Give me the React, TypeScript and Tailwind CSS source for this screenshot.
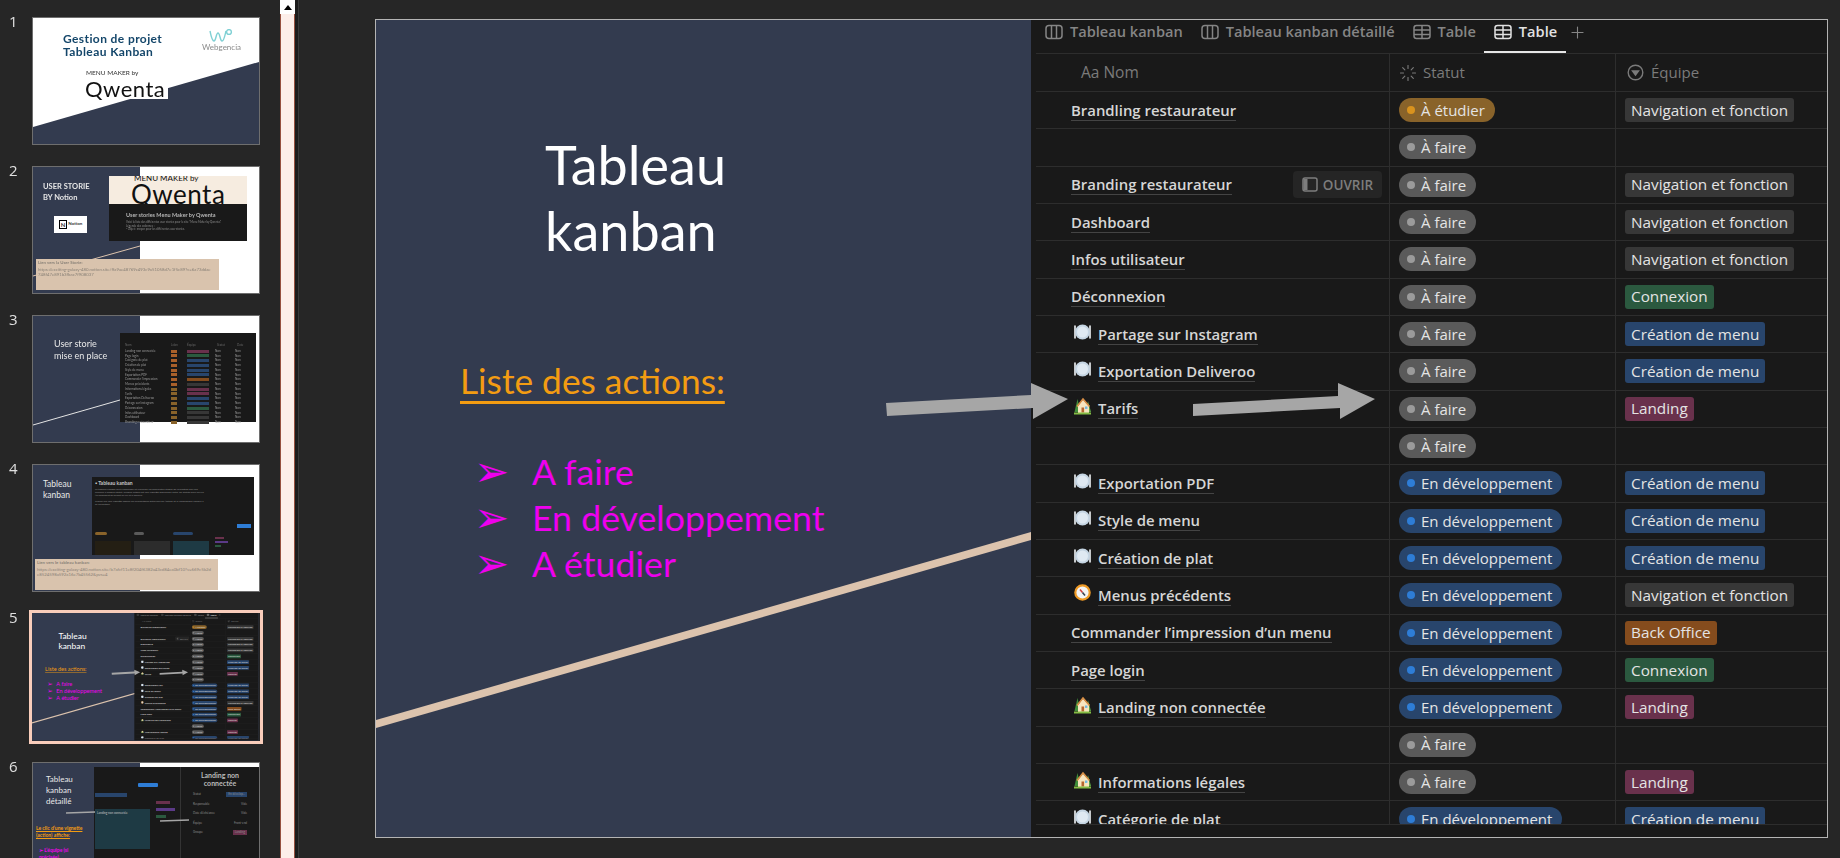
import { Loader, Plus } from "lucide-react";

type Status = "etudier" | "faire" | "dev";
type Team = "nav" | "conn" | "menu" | "land" | "back";
type Emoji = "plate" | "house" | "compass";

const rows: { name?: string; icon?: Emoji; status: Status; team?: Team; open?: boolean }[] = [
  { name: "Brandling restaurateur", status: "etudier", team: "nav" },
  { status: "faire" },
  { name: "Branding restaurateur", status: "faire", team: "nav", open: true },
  { name: "Dashboard", status: "faire", team: "nav" },
  { name: "Infos utilisateur", status: "faire", team: "nav" },
  { name: "Déconnexion", status: "faire", team: "conn" },
  { name: "Partage sur Instagram", icon: "plate", status: "faire", team: "menu" },
  { name: "Exportation Deliveroo", icon: "plate", status: "faire", team: "menu" },
  { name: "Tarifs", icon: "house", status: "faire", team: "land" },
  { status: "faire" },
  { name: "Exportation PDF", icon: "plate", status: "dev", team: "menu" },
  { name: "Style de menu", icon: "plate", status: "dev", team: "menu" },
  { name: "Création de plat", icon: "plate", status: "dev", team: "menu" },
  { name: "Menus précédents", icon: "compass", status: "dev", team: "nav" },
  { name: "Commander l’impression d’un menu", status: "dev", team: "back" },
  { name: "Page login", status: "dev", team: "conn" },
  { name: "Landing non connectée", icon: "house", status: "dev", team: "land" },
  { status: "faire" },
  { name: "Informations légales", icon: "house", status: "faire", team: "land" },
  { name: "Catégorie de plat", icon: "plate", status: "dev", team: "menu" },
];

const statusStyle = {
  etudier: { label: "À étudier", pill: "bg-[#89632a]", dot: "bg-[#d9931e]" },
  faire: { label: "À faire", pill: "bg-[#5a5a5a]", dot: "bg-[#9b9b9b]" },
  dev: { label: "En développement", pill: "bg-[#28456c]", dot: "bg-[#2e7dd6]" },
};

const teamStyle = {
  nav: { label: "Navigation et fonction", tag: "bg-[#373737]" },
  conn: { label: "Connexion", tag: "bg-[#2b593f]" },
  menu: { label: "Création de menu", tag: "bg-[#28456c]" },
  land: { label: "Landing", tag: "bg-[#69314c]" },
  back: { label: "Back Office", tag: "bg-[#854c1d]" },
};

function ColumnsIcon() {
  return (
    <svg width="18" height="16" viewBox="0 0 18 16" fill="none" stroke="currentColor" strokeWidth="1.5">
      <rect x="1" y="1.5" width="16" height="13" rx="3" />
      <path d="M6.5 1.5v13M11.5 1.5v13" />
    </svg>
  );
}

function TableIcon() {
  return (
    <svg width="18" height="16" viewBox="0 0 18 16" fill="none" stroke="currentColor" strokeWidth="1.5">
      <rect x="1" y="1.5" width="16" height="13" rx="2.5" />
      <path d="M1 6h16M1 10.5h16M9 1.5v13" />
    </svg>
  );
}

function EmojiIcon({ kind }: { kind: Emoji }) {
  if (kind === "plate") {
    return (
      <svg width="17" height="20" viewBox="0 0 17 20">
        <path d="M1 4v12M16 4v12" stroke="#f2f5f8" strokeWidth="1.6" strokeLinecap="round" />
        <circle cx="8.5" cy="10" r="7.5" fill="#c5d5e3" />
        <circle cx="8.5" cy="10" r="5.5" fill="#dfe9f2" />
      </svg>
    );
  }
  if (kind === "house") {
    return (
      <svg width="17" height="20" viewBox="0 0 17 20">
        <path d="M3.5 3l-3 13h6z" fill="#3f8f3a" />
        <path d="M14 5l-2 11h5z" fill="#5aa545" />
        <path d="M4 10l5-6.5 6 6.5v7H4z" fill="#f7e6bf" />
        <path d="M3 10.5l6-7.5 6.5 7.5" fill="none" stroke="#d98f45" strokeWidth="1.5" />
        <rect x="7.5" y="11.5" width="2.6" height="5" fill="#b5662e" />
        <rect x="11" y="10.5" width="2.4" height="2.4" fill="#6fb7e0" />
        <rect x="0" y="16.5" width="17" height="2" fill="#84bd45" />
      </svg>
    );
  }
  return (
    <svg width="17" height="20" viewBox="0 0 17 20">
      <circle cx="8.5" cy="9.5" r="7.2" fill="#f4f4f4" stroke="#ee9a26" strokeWidth="2.2" />
      <path d="M6 6.5l2.5 3" stroke="#d33f3f" strokeWidth="1.6" />
      <path d="M8.5 9.5l2.5 3" stroke="#39424e" strokeWidth="1.6" />
    </svg>
  );
}

function Tab({ label, icon, active }: { label: string; icon: "columns" | "table"; active?: boolean }) {
  return (
    <div className={`relative flex h-[33px] items-center gap-[7px] pb-[9px] ${active ? "text-[#e2e2e2]" : "text-[#858585]"}`}>
      {icon === "columns" ? <ColumnsIcon /> : <TableIcon />}
      <span className="whitespace-nowrap text-[14.6px] font-semibold">{label}</span>
      {active && <div className="absolute -left-[10px] -right-[9px] bottom-0 h-[2px] bg-[#e6e6e6]" />}
    </div>
  );
}

function NotionTable() {
  return (
    <div className="flex h-full w-[796px] flex-col bg-[#191919] pl-[5px] font-['Open_Sans',sans-serif]">
      <div className="flex h-[34px] shrink-0 items-start gap-[18px] border-b border-[#2d2d2d] pl-[9px]">
        <Tab label="Tableau kanban" icon="columns" />
        <Tab label="Tableau kanban détaillé" icon="columns" />
        <Tab label="Table" icon="table" />
        <Tab label="Table" icon="table" active />
        <Plus size={19} strokeWidth={1.4} className="-ml-[7px] mt-[3px] text-[#858585]" />
      </div>

      <div className="flex h-[38px] shrink-0 border-b border-[#2d2d2d] text-[15px] text-[#7b7b7b]">
        <div className="flex w-[354px] items-center border-r border-[#2d2d2d] pl-[45px] text-[15.5px]">Aa Nom</div>
        <div className="flex w-[226px] items-center gap-[6px] border-r border-[#2d2d2d] pl-[9px]">
          <Loader size={18} strokeWidth={1.5} />
          Statut
        </div>
        <div className="flex flex-1 items-center gap-[7px] pl-[11px]">
          <svg width="17" height="17" viewBox="0 0 17 17" fill="none" stroke="currentColor" strokeWidth="1.4">
            <circle cx="8.5" cy="8.5" r="7.3" />
            <path d="M5.5 7h6l-3 4z" fill="currentColor" />
          </svg>
          Équipe
        </div>
      </div>

      <div className="min-h-0 flex-1 overflow-hidden">
        {rows.map((row, i) => (
          <Row key={i} {...row} />
        ))}
      </div>
      <div className="h-[13px] shrink-0 border-t border-[#2d2d2d]" />
    </div>
  );
}

function Row({ name, icon, status, team, open }: (typeof rows)[number]) {
  const s = statusStyle[status];
  const t = team ? teamStyle[team] : null;
  return (
    <div className="flex h-[37.33px] border-b border-[#2d2d2d]">
      <div className="flex w-[354px] items-center border-r border-[#2d2d2d] pl-[35px]">
        {icon && (
          <span className="mr-[7px] -mt-[5px] ml-[3px]">
            <EmojiIcon kind={icon} />
          </span>
        )}
        {name && (
          <span className="whitespace-nowrap border-b border-[#444444] text-[14.9px] font-semibold leading-[20px] text-[#d6d6d6]">
            {name}
          </span>
        )}
        {open && (
          <div className="ml-auto mr-[7px] flex h-[27px] w-[89px] items-center justify-center gap-[5px] rounded-[4px] bg-[#252525] text-[13.5px] font-semibold text-[#7d7d7d]">
            <svg width="16" height="15" viewBox="0 0 16 15" fill="none" stroke="currentColor" strokeWidth="1.5">
              <rect x="1" y="1" width="14" height="13" rx="2" />
              <rect x="1.5" y="2" width="4" height="11" fill="currentColor" stroke="none" />
            </svg>
            OUVRIR
          </div>
        )}
      </div>
      <div className="flex w-[226px] items-center border-r border-[#2d2d2d] pl-[9px]">
        <span className={`flex h-[24px] items-center gap-[6px] rounded-full pl-[8px] pr-[10px] text-[15px] text-[#e4e4e4] ${s.pill}`}>
          <span className={`h-[8px] w-[8px] rounded-full ${s.dot}`} />
          {s.label}
        </span>
      </div>
      <div className="flex flex-1 items-center pl-[9px]">
        {t && (
          <span className={`flex h-[24px] items-center rounded-[3px] px-[6px] text-[15.3px] text-[#e4e4e4] ${t.tag}`}>
            {t.label}
          </span>
        )}
      </div>
    </div>
  );
}

// main slide, also reused at small scale for thumbnail 5
function KanbanSlide() {
  return (
    <div className="relative flex h-[817px] w-[1451px] overflow-hidden bg-[#333b4f]">
      <div className="relative z-0 w-[655px] shrink-0 font-['Lato',sans-serif]">
        <div className="pl-[169px] pt-[112px] text-[54px] leading-[66px] text-white">
          <div>Tableau</div>
          <div>kanban</div>
        </div>
        <div className="mt-[95px] pl-[84px] text-[35.3px] leading-[44px] text-[#f39c12]">
          <span className="underline decoration-[3px] underline-offset-[7px]">Liste des actions:</span>
        </div>
        <ul className="mt-[46px] flex flex-col pl-[98px] text-[35.7px] leading-[46px] text-[#ee00ee]">
          {["A faire", "En développement", "A étudier"].map((t) => (
            <li key={t} className="flex items-center">
              <span className="w-[58px] shrink-0 font-['DejaVu_Sans',sans-serif] text-[42px] leading-none">➢</span>
              {t}
            </li>
          ))}
        </ul>
      </div>
      <NotionTable />

      <svg className="pointer-events-none absolute inset-0" width="1451" height="817" viewBox="376 20 1451 817">
        <path d="M376 720L1031 532V540L376 728Z" fill="#dcc3ad" />
        <path d="M886 403L1031 395V383L1068 399L1033 419V408L887 416Z" fill="#a6a6a6" />
        <path d="M1193 404L1338 396V383L1375 399L1340 419V408L1193 416Z" fill="#a6a6a6" />
      </svg>
    </div>
  );
}

function Thumb({ n, selected, children }: { n: number; selected?: boolean; children: React.ReactNode }) {
  return (
    <div className="flex items-start">
      <div className="-mt-[6px] w-[32px] pl-[9px] font-['Open_Sans',sans-serif] text-[15px] leading-[20px] text-[#e0e0e0]">{n}</div>
      <div
        className={`relative h-[128px] w-[228px] shrink-0 overflow-hidden ${
          selected ? "ring-[3px] ring-[#f9cdbb]" : "border border-[#6e6e6e]"
        }`}
      >
        {children}
      </div>
    </div>
  );
}

function MiniTable({ rowsCount }: { rowsCount: number }) {
  const tags = ["bg-[#69314c]", "bg-[#2b593f]", "bg-[#28456c]", "bg-[#28456c]", "bg-[#28456c]", "bg-[#28456c]", "bg-[#854c1d]", "bg-[#373737]", "bg-[#69314c]", "bg-[#69314c]", "bg-[#28456c]", "bg-[#28456c]", "bg-[#2b593f]", "bg-[#373737]", "bg-[#373737]", "bg-[#373737]"];
  const names = ["Landing non connectée", "Page login", "Catégorie de plat", "Création de plat", "Style de menu", "Exportation PDF", "Commander l’impression", "Menus précédents", "Informations légales", "Tarifs", "Exportation Deliveroo", "Partage sur Instagram", "Déconnexion", "Infos utilisateur", "Dashboard", "Branding restaurateur"];
  return (
    <div className="h-full w-full bg-[#191919] px-[5px] pt-[10px] text-[3px] leading-[4.75px] text-[#9a9a9a]">
      <div className="mb-[1px] flex text-[#666666]">
        <span className="w-[46px]">Nom</span>
        <span className="w-[16px]">Jalon</span>
        <span className="w-[30px]">Équipe</span>
        <span className="w-[20px]">Statut</span>
        <span>Date</span>
      </div>
      {names.slice(0, rowsCount).map((name, i) => (
        <div key={name} className="flex h-[4.75px] items-center">
          <span className="w-[46px] whitespace-nowrap">{name}</span>
          <span className={`mr-[10px] h-[3px] w-[6px] ${i < 8 ? "bg-[#a9602a]" : "bg-[#89632a]"}`} />
          <span className={`mr-[6px] h-[3px] w-[22px] ${tags[i]}`} />
          <span className="w-[20px]">Non</span>
          <span>Non</span>
        </div>
      ))}
    </div>
  );
}

function TanBox({ top, left, title, url }: { top: number; left: number; title: string; url: string }) {
  return (
    <div
      className="absolute h-[31px] w-[183px] bg-[#d9c3ad] px-[2px] pt-[1px] text-[4.3px] leading-[5.2px] text-[#8a8278]"
      style={{ top, left }}
    >
      <div className="mb-[2px] font-bold">{title}</div>
      <div className="w-[175px] break-all">{url}</div>
    </div>
  );
}

function Thumbnails() {
  return (
    <div className="flex w-[280px] shrink-0 flex-col gap-[21px] overflow-hidden pt-[17px] font-['Lato',sans-serif] blur-[0.35px]">
      <Thumb n={1}>
        <div className="relative h-full w-full bg-white">
          <svg className="absolute inset-0" width="226" height="126" viewBox="0 0 226 126">
            <path d="M0 109L226 44V126H0Z" fill="#333b4f" />
          </svg>
          <div className="absolute left-[30px] top-[14px] text-[12px] font-bold leading-[13px] tracking-[0.4px] text-[#14466a]">
            Gestion de projet
            <br />
            Tableau Kanban
          </div>
          <svg className="absolute left-[176px] top-[11px]" width="24" height="14" viewBox="0 0 24 14" fill="none" stroke="#7fd0d4" strokeWidth="1.4">
            <path d="M1 2c1 5 2 10 4 10s2-8 4-8 2 8 4 8 3-6 4-10" />
            <circle cx="20" cy="3" r="2.4" />
          </svg>
          <div className="absolute left-[169px] top-[23px] text-[8px] text-[#8a8a8a]">Webgencia</div>
          <div className="absolute left-[53px] top-[50px] text-[6.5px] text-[#333333]">MENU MAKER by</div>
          <div className="absolute left-[50px] top-[60px] h-[21px] bg-white pr-[3px] pl-[2px] text-[22px] leading-[21px] tracking-[0.5px] text-[#111111]">
            Qwenta
          </div>
        </div>
      </Thumb>

      <Thumb n={2}>
        <div className="relative h-full w-full bg-white">
          <div className="absolute inset-y-0 left-0 w-[107px] bg-[#333b4f]" />
          <svg className="absolute inset-0" width="226" height="126" viewBox="0 0 226 126">
            <path d="M0 109L107 79" stroke="#dcc3ad" strokeWidth="1" />
          </svg>
          <div className="absolute left-[10px] top-[14px] text-[7.5px] font-bold leading-[11px] text-[#e6e6e6]">
            USER STORIE
            <br />
            BY Notion
          </div>
          <div className="absolute left-[21px] top-[49px] flex h-[17px] w-[33px] items-center justify-center gap-[1px] bg-white text-[4.5px] font-bold text-[#333333]">
            <span className="border border-black px-[1px] text-[6px] leading-[7px]">N</span>
            Notion
          </div>
          <div className="absolute left-[76px] top-[9px] flex h-[65px] w-[138px] flex-col bg-[#191919]">
            <div className="h-[28px] overflow-hidden bg-[#f6ece0] pl-[25px] text-[#111111]">
              <div className="-mt-[2px] text-[8px] leading-[8px]">MENU MAKER by</div>
              <div className="-ml-[3px] mt-[1px] text-[26px] leading-[22px] tracking-[0.5px]">Qwenta</div>
            </div>
            <div className="px-[17px] pt-[8px] text-[5.5px] font-bold leading-[7px] text-[#b5b5b5]">
              User stories Menu Maker by Qwenta
              <div className="mt-[2px] text-[2.8px] font-normal leading-[3.6px] text-[#8c8c8c]">
                Voici la liste des différentes user stories pour le site “Menu Maker by Qwenta”.
                <br />
                Légende des colonnes :
                <br />
                - Objet : moyen pour les différentes user stories.
              </div>
            </div>
          </div>
          <TanBox
            top={92}
            left={3}
            title="Lien vers la User Storie:"
            url="https://exciting-galaxy-480.notion.site/ffa9ae48769c493c9a51058d7e1f5c89?v=6a73ddae748f47e891b3fbac7f908037"
          />
        </div>
      </Thumb>

      <Thumb n={3}>
        <div className="relative h-full w-full bg-white">
          <div className="absolute inset-y-0 left-0 w-[107px] bg-[#333b4f]" />
          <svg className="absolute inset-0" width="226" height="126" viewBox="0 0 226 126">
            <path d="M0 109L87 84" stroke="#e4e4e4" strokeWidth="1" />
          </svg>
          <div className="absolute left-[21px] top-[22px] text-[9px] leading-[12px] text-[#e8e8e8]">
            User storie
            <br />
            mise en place
          </div>
          <div className="absolute left-[87px] top-[17px] h-[89px] w-[136px]">
            <MiniTable rowsCount={16} />
          </div>
        </div>
      </Thumb>

      <Thumb n={4}>
        <div className="relative h-full w-full bg-white">
          <div className="absolute inset-y-0 left-0 w-[107px] bg-[#333b4f]" />
          <div className="absolute left-[10px] top-[14px] text-[8.5px] leading-[11px] text-[#e8e8e8]">
            Tableau
            <br />
            kanban
          </div>
          <div className="absolute left-[59px] top-[12px] h-[78px] w-[162px] bg-[#191919] px-[3px] pt-[3px] text-[2.6px] leading-[3px] text-[#8c8c8c]">
            <div className="mb-[2px] text-[5px] font-bold leading-[6px] text-[#c5c5c5]">▪ Tableau kanban</div>
            <div className="w-[110px]">
              Le tableau kanban sert à découper et visualiser les différentes étapes de réalisation par une colonne à chaque statut. Chaque action est une vignette déplaçable entre les statuts pour suivre l’avancement du projet au fur et à mesure.
            </div>
            <div className="mt-[3px] w-[110px]">
              Cliquer sur une vignette affiche les informations détaillées de l’action et le responsable associé à sa réalisation.
            </div>
            <div className="absolute right-[3px] top-[47px] h-[4px] w-[14px] bg-[#2e7dd6]" />
            <div className="absolute left-[3px] top-[55px] h-[3px] w-[12px] rounded-full bg-[#89632a]" />
            <div className="absolute left-[42px] top-[55px] h-[3px] w-[10px] rounded-full bg-[#5a5a5a]" />
            <div className="absolute left-[81px] top-[55px] h-[3px] w-[20px] rounded-full bg-[#28456c]" />
            <div className="absolute left-[42px] top-[64px] h-[14px] w-[36px] bg-[#2c2c2c]" />
            <div className="absolute left-[81px] top-[64px] h-[14px] w-[36px] bg-[#1e3a44]" />
            <div className="absolute left-[3px] top-[64px] h-[14px] w-[36px] bg-[#241f14]" />
            <div className="absolute left-[123px] top-[60px] h-[2px] w-[9px] bg-[#69314c]" />
            <div className="absolute left-[123px] top-[64px] h-[2px] w-[13px] bg-[#5b3a87]" />
            <div className="absolute left-[123px] top-[68px] h-[2px] w-[6px] bg-[#2b593f]" />
          </div>
          <TanBox
            top={94}
            left={2}
            title="Lien vers le tableau kanban:"
            url="https://exciting-galaxy-480.notion.site/b7afcf11e8f204f6382a43cd84ea0bf10?v=669c5b2de8524598a592a16e7b45562&pvs=4"
          />
        </div>
      </Thumb>

      <Thumb n={5} selected>
        <div className="h-[817px] w-[1451px] origin-top-left scale-[0.1562]">
          <KanbanSlide />
        </div>
      </Thumb>

      <Thumb n={6}>
        <div className="relative h-full w-full bg-[#333b4f]">
          <div className="absolute left-[107px] right-0 top-0 h-[4px] bg-white" />
          <div className="absolute left-[61px] right-0 top-[4px] flex h-[124px] bg-[#191919] text-[3px] text-[#8c8c8c]">
            <div className="relative w-[87px] border-r border-[#333333]">
              <div className="absolute left-[44px] top-[16px] h-[4px] w-[20px] rounded-[1px] bg-[#2e7dd6]" />
              <div className="absolute left-[1px] top-[26px] h-[4px] w-[32px] bg-[#28456c]" />
              <div className="absolute left-[1px] top-[42px] h-[40px] w-[55px] bg-[#1e3a44] p-[2px] text-[#c8c8c8]">Landing non connectée</div>
              <div className="absolute left-[62px] top-[34px] h-[3px] w-[14px] bg-[#69314c]" />
              <div className="absolute left-[62px] top-[41px] h-[3px] w-[19px] bg-[#5b3a87]" />
              <div className="absolute left-[62px] top-[48px] h-[3px] w-[10px] bg-[#2b593f]" />
            </div>
            <div className="relative flex-1 px-[12px] pt-[4px]">
              <div className="text-center text-[7px] font-bold leading-[8px] text-[#b9b9b9]">Landing non connectée</div>
              <div className="mt-[5px] flex justify-between"><span>Statut</span><span className="bg-[#28456c] px-[2px]">En dévelop...</span></div>
              <div className="mt-[5px] flex justify-between"><span>Responsable</span><span>Vide</span></div>
              <div className="mt-[5px] flex justify-between"><span>Date d’échéance</span><span>Vide</span></div>
              <div className="mt-[5px] flex justify-between"><span>Équipe</span><span>Front-end</span></div>
              <div className="mt-[5px] flex justify-between"><span>Groupe</span><span className="bg-[#69314c] px-[2px]">Landing</span></div>
            </div>
          </div>
          <svg className="absolute inset-0" width="226" height="126" viewBox="0 0 226 126">
            <path d="M33 50L62 49" stroke="#a6a6a6" strokeWidth="1.4" />
            <path d="M127 58L156 57" stroke="#a6a6a6" strokeWidth="1.4" />
          </svg>
          <div className="absolute left-[13px] top-[11px] text-[8px] leading-[11px] text-[#e8e8e8]">
            Tableau
            <br />
            kanban
            <br />
            détaillé
          </div>
          <div className="absolute left-[3px] top-[62px] w-[60px] text-[5px] font-bold leading-[7px] text-[#f39c12] underline">
            Le clic d’une vignette (action) affiche:
          </div>
          <div className="absolute left-[6px] top-[84px] w-[50px] text-[5px] font-bold leading-[7px] text-[#ee00ee]">
            ➢ L’équipe (si précisée)
          </div>
        </div>
      </Thumb>
    </div>
  );
}

export default function App() {
  return (
    <div className="flex h-[858px] w-[1840px] overflow-hidden bg-[#262626]">
      <Thumbnails />

      {/* pane scrollbar */}
      <div className="flex h-full w-[15px] shrink-0 flex-col">
        <div className="flex h-[14px] shrink-0 items-center justify-center bg-white">
          <div className="h-0 w-0 border-x-[4px] border-b-[5px] border-x-transparent border-b-black" />
        </div>
        <div className="flex-1 border-x border-x-[#96503f] bg-[#fdeee9]" />
      </div>
      <div className="h-full w-[3px] shrink-0 bg-[#1c1c1c]" />
      <div className="h-full w-px shrink-0 bg-[#3a3a3a]" />

      <div className="flex-1 pl-[76px] pt-[19px]">
        <div className="w-[1453px] border border-[#b4b4b4]">
          <KanbanSlide />
        </div>
      </div>
    </div>
  );
}
